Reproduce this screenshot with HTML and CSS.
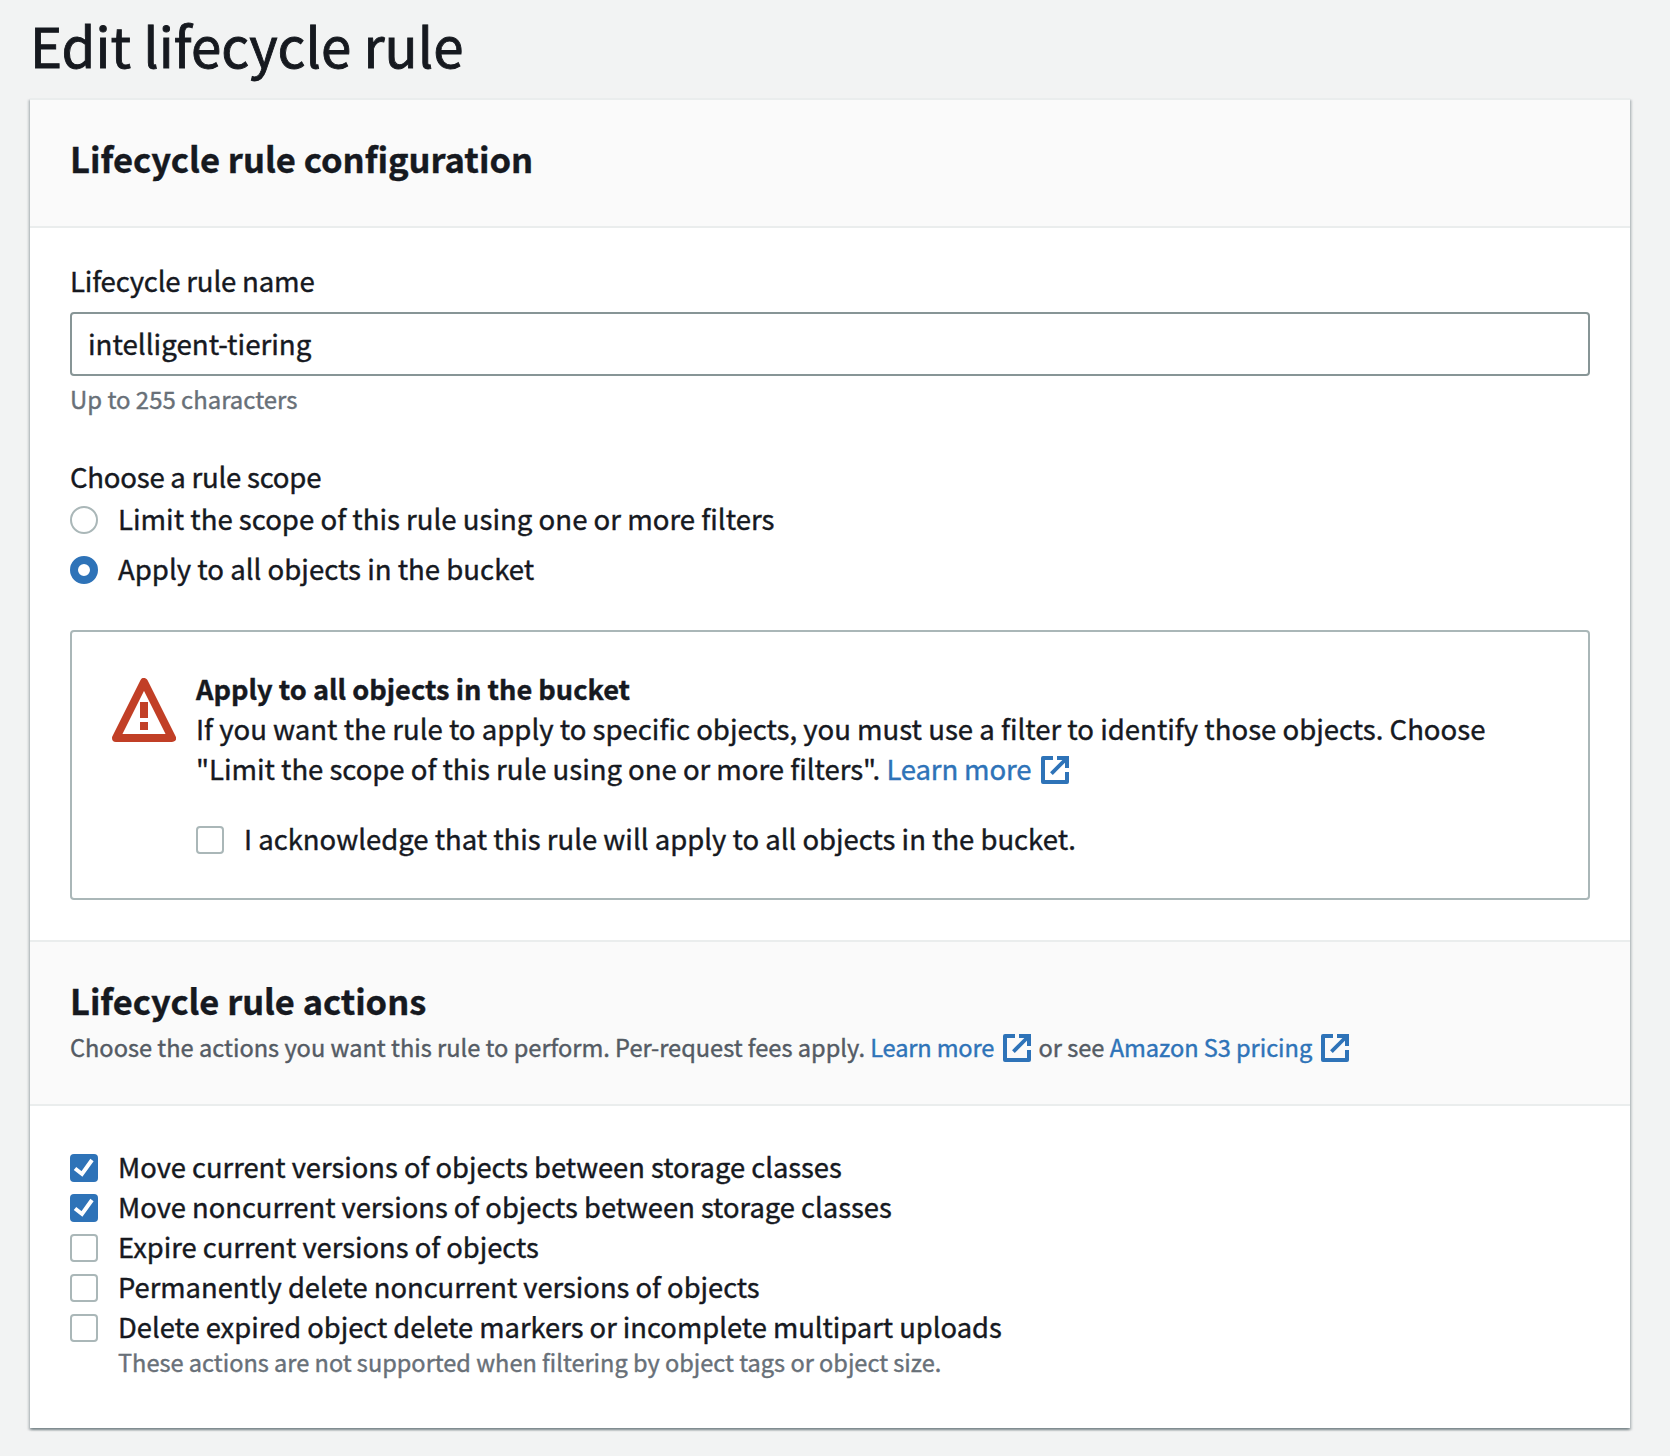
FILE: index.html
```html
<!DOCTYPE html>
<html lang="en">
<head>
<meta charset="utf-8">
<title>Edit lifecycle rule</title>
<link rel="stylesheet" href="styles.css">
</head>
<body>
<svg class="sprite" aria-hidden="true">
  <symbol id="external" viewBox="1 1 14 14">
    <path d="M9 2h5v5" fill="none" stroke="currentColor" stroke-width="2"/>
    <path d="M6.2 9.8L14 2" fill="none" stroke="currentColor" stroke-width="1.9"/>
    <path d="M14 9v5H2V2h5" fill="none" stroke="currentColor" stroke-width="2" stroke-linejoin="round"/>
  </symbol>
  <symbol id="check" viewBox="0 0 28 28">
    <path d="M5 14.5l7 5.5L22 6" fill="none" stroke="#fff" stroke-width="4"/>
  </symbol>
</svg>
<main class="page">
  <h1 class="page-title">Edit lifecycle rule</h1>
  <div class="card">
    <header class="card-header">
      <h2 class="card-title card-title-main">Lifecycle rule configuration</h2>
    </header>
    <section class="card-body">
      <label class="label" for="name">Lifecycle rule name</label>
      <input class="text-input" id="name" type="text" value="intelligent-tiering">
      <p class="hint">Up to 255 characters</p>

      <div class="scope">
        <div class="label label-scope">Choose a rule scope</div>
        <div class="option"><span class="radio"></span><span>Limit the scope of this rule using one or more filters</span></div>
        <div class="option"><span class="radio radio-on"></span><span>Apply to all objects in the bucket</span></div>
      </div>

      <div class="alert">
        <svg class="alert-icon" viewBox="0 0 16 16">
          <path d="M8 1l7 14H1z" fill="none" stroke="currentColor" stroke-width="2" stroke-linejoin="round"/>
          <path d="M8 6v4M8 11v2" stroke="currentColor" stroke-width="2"/>
        </svg>
        <div class="alert-content">
          <div class="alert-title">Apply to all objects in the bucket</div>
          <div class="alert-text">If you want the rule to apply to specific objects, you must use a filter to identify those objects. Choose<br><span class="quoted">"Limit the scope of this rule using one or more filters".</span> <a class="link">Learn more<svg class="external"><use href="#external"/></svg></a></div>
          <div class="option option-ack"><span class="checkbox"></span><span>I acknowledge that this rule will apply to all objects in the bucket.</span></div>
        </div>
      </div>
    </section>

    <header class="card-header card-header-divided">
      <h2 class="card-title">Lifecycle rule actions</h2>
      <p class="description">Choose the actions you want this rule to perform. Per-request fees apply. <a class="link">Learn more<svg class="external"><use href="#external"/></svg></a> or see <a class="link link-pricing">Amazon S3 pricing<svg class="external"><use href="#external"/></svg></a></p>
    </header>
    <section class="actions">
      <div class="option"><span class="checkbox checkbox-on"><svg><use href="#check"/></svg></span><span>Move current versions of objects between storage classes</span></div>
      <div class="option"><span class="checkbox checkbox-on"><svg><use href="#check"/></svg></span><span>Move noncurrent versions of objects between storage classes</span></div>
      <div class="option"><span class="checkbox"></span><span>Expire current versions of objects</span></div>
      <div class="option"><span class="checkbox"></span><span>Permanently delete noncurrent versions of objects</span></div>
      <div class="option"><span class="checkbox"></span><span>Delete expired object delete markers or incomplete multipart uploads</span></div>
      <p class="hint hint-option">These actions are not supported when filtering by object tags or object size.</p>
    </section>
  </div>
</main>
</body>
</html>
```

FILE: styles.css
```css
* {
  box-sizing: border-box;
}

body {
  margin: 0;
  background: #f2f3f3;
  color: #16191f;
  font-family: "Noto Sans CJK SC", "Noto Sans", sans-serif;
  font-size: 27.58px;
  line-height: 40px;
  -webkit-text-stroke: 0.4px currentColor;
}

h1, h2, p {
  margin: 0;
}

.sprite {
  display: none;
}

.page {
  min-height: 100vh;
  padding: 13px 40px 28px 30px;
}

.page-title {
  font-size: 54.6px;
  font-weight: 400;
  line-height: 64px;
  white-space: nowrap;
  -webkit-text-stroke-width: 0.9px;
}

.card {
  margin-top: 21px;
  border-top: 2px solid #eaeded;
  background: #fff;
  box-shadow: 0 2px 2px 0 rgba(0, 28, 36, 0.3), 2px 2px 2px 0 rgba(0, 28, 36, 0.15), -2px 2px 2px 0 rgba(0, 28, 36, 0.15);
}

.card-header {
  padding: 36px 40px 46px;
  border-bottom: 2px solid #eaeded;
  background: #fafafa;
}

.card-header-divided {
  padding-bottom: 41px;
  border-top: 2px solid #eaeded;
}

.card-title {
  font-size: 34.4px;
  font-weight: 700;
  line-height: 44px;
}

.card-title-main {
  font-size: 34.55px;
}

.description {
  margin-top: 9px;
  color: #545b64;
  font-size: 23.6px;
  line-height: 32px;
  white-space: nowrap;
}

.card-body {
  padding: 32px 40px 40px;
}

.label {
  display: block;
  letter-spacing: -0.2px;
}

.text-input {
  display: block;
  width: 100%;
  height: 64px;
  margin-top: 12px;
  padding: 0 16px 2px;
  border: 2px solid #879596;
  border-radius: 4px;
  background: #fff;
  color: #16191f;
  font: inherit;
  font-size: 27.7px;
}

.hint {
  margin-top: 7px;
  color: #687078;
  font-size: 23.9px;
  line-height: 32px;
}

.scope {
  display: flex;
  flex-direction: column;
  gap: 10px;
  margin-top: 41px;
}

.label-scope {
  margin-bottom: -8px;
  letter-spacing: -0.25px;
}

.option {
  display: flex;
  gap: 20px;
  white-space: nowrap;
}

.radio,
.checkbox {
  flex: none;
  width: 28px;
  height: 28px;
  margin-top: 8px;
  border: 2px solid #aab7b8;
  background: #fff;
}

.radio {
  border-radius: 50%;
}

.radio-on {
  border: 8px solid #2e73b8;
}

.checkbox {
  border-radius: 4px;
}

.checkbox-on {
  border: 0;
  background: #2e73b8;
}

.checkbox-on svg {
  display: block;
  width: 28px;
  height: 28px;
}

.alert {
  display: flex;
  gap: 20px;
  margin-top: 42px;
  padding: 36px 40px 40px;
  border: 2px solid #aab7b8;
  border-radius: 4px;
}

.alert-icon {
  flex: none;
  width: 64px;
  height: 64px;
  margin-top: 10px;
  color: #c13f26;
}

.alert-title {
  font-size: 27.2px;
  font-weight: 700;
}

.alert-text {
  font-size: 27.55px;
  white-space: nowrap;
}

.quoted {
  letter-spacing: -0.03px;
}

.link {
  color: #2e73b8;
  letter-spacing: -0.15px;
}

.link-pricing {
  letter-spacing: -0.05px;
}

.external {
  width: 28px;
  height: 28px;
  margin-left: 10px;
  vertical-align: -4px;
}

.description .external {
  margin-right: 2px;
  margin-left: 9px;
  vertical-align: -5px;
}

.option-ack {
  margin-top: 30px;
  font-size: 27.48px;
}

.actions {
  padding: 40px 40px 50px;
  font-size: 27.33px;
}

.hint-option {
  margin: 0 0 0 48px;
  font-size: 23.55px;
}
```
